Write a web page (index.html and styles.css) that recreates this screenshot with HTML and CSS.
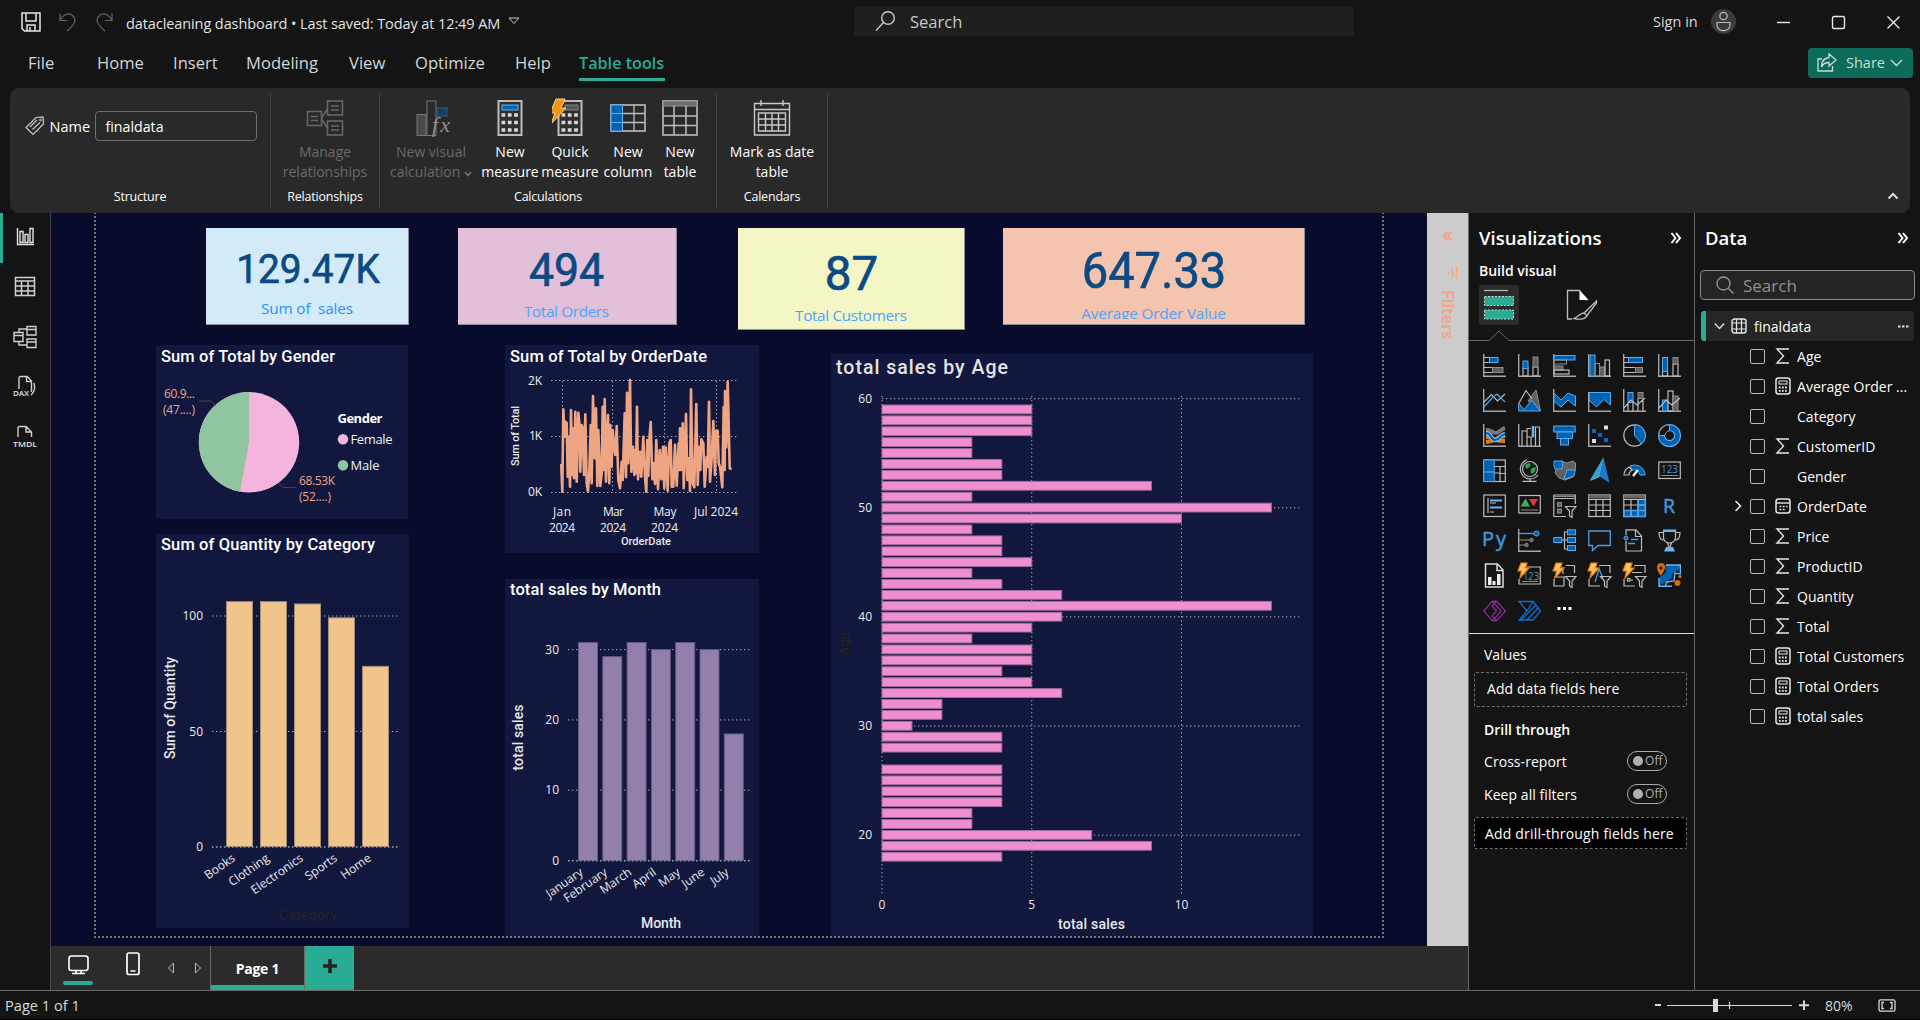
FILE: index.html
```html
<!DOCTYPE html>
<html lang="en">
<head>
<meta charset="utf-8">
<title>datacleaning dashboard</title>
<link rel="stylesheet" href="styles.css">
</head>
<body>
<header class="titlebar">
  <div class="quick">
    <svg width="20" height="20" viewBox="0 0 20 20" class="ln"><path stroke="#e6e6e6" stroke-width="1.5" d="M1 1H19V19H3.5L1 16.5ZM5 1V9H15V1M6 19V13H14V19M9 19V15"/></svg>
    <svg width="18" height="20" viewBox="0 0 18 20" class="ln"><path stroke="#666" stroke-width="1.2" d="M1 1.500V8.500H8M1 8C4 3 9 0 13 3C19 8 15 13 8 19"/></svg>
    <svg width="18" height="20" viewBox="0 0 18 20" class="ln"><path stroke="#666" stroke-width="1.2" d="M17 1.500V8.500H10M17 8C14 3 9 0 5 3C-1 8 3 13 10 19"/></svg>
  </div>
  <span class="doc">datacleaning dashboard • Last saved: Today at 12:49 AM</span>
  <svg class="ln doc-arrow" width="12" height="8" viewBox="0 0 12 8"><path stroke="#ccc" d="M1 1H11L6 6.500Z"/></svg>
  <div class="search-top">
    <svg width="22" height="22" viewBox="0 0 22 22" class="ln"><circle cx="13" cy="8" r="6.300" stroke="#c8c8c8" stroke-width="1.400"/><path stroke="#c8c8c8" stroke-width="1.400" d="M8.500 12.500L1 20.500"/></svg>
    <span>Search</span>
  </div>
  <div class="account"><span>Sign in</span>
    <svg width="25" height="25" viewBox="0 0 25 25" class="ln"><circle cx="12.500" cy="12.500" r="12.500" fill="#3b3b3b"/><circle cx="12.500" cy="7" r="3.700" stroke="#bbb" stroke-width="1.200"/><path stroke="#bbb" stroke-width="1.200" d="M6 13.500H19V16C19 23.500 6 23.500 6 16Z"/></svg>
  </div>
  <div class="winbtns">
    <svg width="15" height="15" viewBox="0 0 15 15" class="ln"><path stroke="#e6e6e6" stroke-width="1.400" d="M1 7.500H14"/></svg>
    <svg width="15" height="15" viewBox="0 0 15 15" class="ln"><rect x="1.500" y="1.500" width="12" height="12" rx="1.500" stroke="#e6e6e6" stroke-width="1.400"/></svg>
    <svg width="15" height="15" viewBox="0 0 15 15" class="ln"><path stroke="#e6e6e6" stroke-width="1.400" d="M1.500 1.500L13.500 13.500M13.500 1.500L1.500 13.500"/></svg>
  </div>
</header>
<nav class="menubar">
  <span class="m-file">File</span><span class="m-home">Home</span><span class="m-insert">Insert</span><span class="m-model">Modeling</span><span class="m-view">View</span><span class="m-opt">Optimize</span><span class="m-help">Help</span><span class="m-tools active">Table tools</span>
  <button class="share"><svg width="20" height="20" viewBox="0 0 20 20" class="ln"><path stroke="#c6ded8" stroke-width="1.300" d="M5 6H1V18H15.500V13M12 1L19 7L12 13V9.500C8 9.500 6 11 4.500 14C4.500 8 8 5 12 4.500Z"/></svg><span>Share</span><svg width="13" height="8" viewBox="0 0 13 8" class="ln"><path stroke="#c6ded8" stroke-width="1.400" d="M1 1L6.500 6.500L12 1"/></svg></button>
</nav>

<section class="ribbon">
  <div class="group g-structure">
    <div class="name-row">
      <svg width="20" height="20" viewBox="0 0 20 20" class="ln"><path stroke="#c8c8c8" stroke-width="1.200" d="M11 1.500L18 1L18.500 8L8 18.500L1 11.500ZM5 11L12 4M7.500 13.500L15 6.500"/><circle cx="15.500" cy="4" r="1" stroke="#c8c8c8"/></svg>
      <label>Name</label><div class="name-input">finaldata</div>
    </div>
    <div class="glabel">Structure</div>
  </div>
  <div class="group g-rel">
    <div class="btns"><div class="rbtn dim">
      <svg width="38" height="40" viewBox="0 0 38 40" class="ln"><g stroke="#666" stroke-width="1.600"><rect x="1.500" y="13.500" width="14" height="14"/><rect x="21.500" y="3" width="15" height="14"/><rect x="21.500" y="23" width="15" height="14"/><path d="M4.500 18.500H12M4.500 22.500H12M25 8H33M25 12H33M25 28H33M25 32H33M15.500 20L21.500 11M15.500 21L21.500 30"/></g></svg>
      <span>Manage<br>relationships</span></div></div>
    <div class="glabel">Relationships</div>
  </div>
  <div class="group g-calc">
    <div class="btns">
      <div class="rbtn dim w96">
        <svg width="38" height="40" viewBox="-3 0 38 40" class="ln"><rect x="2" y="16.500" width="9" height="21" fill="#4a4a4a" stroke="#777"/><rect x="12" y="3" width="9" height="34.500" stroke="#777"/><rect x="22" y="10" width="10" height="8" fill="#173f60" stroke="#2c5c82"/><text x="17" y="34" class="fx" textLength="18">fx</text></svg>
        <span>New visual<br>calculation <svg width="8" height="6" viewBox="0 0 8 6" class="ln"><path stroke="#777" stroke-width="1.500" d="M1 1L4 4.500L7 1"/></svg></span></div>
      <div class="rbtn w62">
        <svg width="26" height="40" viewBox="0 0 26 40" class="ln"><rect x="1.500" y="3" width="23" height="34" fill="#2f2f2f" stroke="#bdbdbd" stroke-width="2"/><rect x="5" y="7" width="16" height="5" fill="#0064b5" stroke="#69afe9"/><path stroke="#d6d6d6" stroke-width="3.600" stroke-dasharray="3.800 2.500" d="M4.500 17H21.500M4.500 24.500H21.500M4.500 32H21.500"/></svg>
        <span>New<br>measure</span></div>
      <div class="rbtn w58">
        <svg width="36" height="40" viewBox="4 0 36 40" class="ln quick-ico"><rect x="10.500" y="3" width="23" height="34" fill="#2f2f2f" stroke="#bdbdbd" stroke-width="2"/><rect x="17" y="7" width="13" height="5" fill="#555" stroke="#888"/><path stroke="#d6d6d6" stroke-width="3.600" stroke-dasharray="3.800 2.500" d="M13.500 17H30.500M13.500 24.500H30.500M13.500 32H30.500"/><path fill="#ef9518" stroke="#ffd48a" d="M8 1H17L13 10H18L3 26L7 15H2Z"/></svg>
        <span>Quick<br>measure</span></div>
      <div class="rbtn w58">
        <svg width="38" height="40" viewBox="0 0 38 40" class="ln"><rect x="2" y="7" width="34" height="26" stroke="#bdbdbd" stroke-width="1.600"/><rect x="2" y="7" width="11.500" height="26" fill="#0064b5" stroke="#69afe9"/><path stroke="#bdbdbd" stroke-width="1.300" d="M25 7V33M13.500 15.500H36M13.500 24.500H36"/><path stroke="#69afe9" d="M2 15.500H13.500M2 24.500H13.500"/></svg>
        <span>New<br>column</span></div>
      <div class="rbtn w46">
        <svg width="38" height="40" viewBox="0 0 38 40" class="ln"><rect x="2" y="3" width="34" height="34" stroke="#bdbdbd" stroke-width="1.600"/><rect x="2" y="3" width="34" height="5" fill="#6a6a6a" stroke="#999"/><path stroke="#bdbdbd" stroke-width="1.500" d="M13 8V37M25 8V37M2 18H36M2 27.500H36"/></svg>
        <span>New<br>table</span></div>
    </div>
    <div class="glabel">Calculations</div>
  </div>
  <div class="group g-cal">
    <div class="btns"><div class="rbtn">
      <svg width="38" height="40" viewBox="0 0 38 40" class="ln"><path stroke="#c9c9c9" stroke-width="1.400" d="M1.500 5.500H36.500V37H1.500ZM1.500 11.500H36.500M8 2V8M30 2V8M5.500 15H32.500V33H5.500ZM12.500 15V33M19 15V33M25.500 15V33M5.500 21H32.500M5.500 27H32.500"/></svg>
      <span>Mark as date<br>table</span></div></div>
    <div class="glabel">Calendars</div>
  </div>
  <div class="collapse"><svg width="12" height="8" viewBox="0 0 12 8" class="ln"><path stroke="#ddd" stroke-width="2" d="M1.500 6.500L6 2L10.500 6.500"/></svg></div>
</section>

<main class="work">
  <aside class="rail">
    <div class="rail-item on"><svg width="19" height="19" viewBox="0 0 19 19" class="ln"><path stroke="#e2e2e2" stroke-width="1.400" d="M1.500 1V17.500H18M4 15.500V4.500H7V15.500ZM9 15.500V7.500H12V15.500ZM14 15.500V1.500H17V15.500Z"/></svg></div>
    <div class="rail-item"><svg width="22" height="21" viewBox="0 0 22 21" class="ln"><path stroke="#cfcfcf" stroke-width="1.500" d="M1.500 1.500H20.500V19.500H1.500ZM1.500 5H20.500M1.500 10H20.500M1.500 15H20.500M7.500 5V19.500M14 5V19.500"/></svg></div>
    <div class="rail-item"><svg width="24" height="24" viewBox="0 0 24 24" class="ln"><path stroke="#cfcfcf" stroke-width="1.400" d="M14 1.500H23V10H14ZM14 4.500H23M14 14H23V22.500H14ZM14 17H23M1 7.500H10V16.500H1ZM1 10.500H10M6 7.500V4H14M6 16.500V20H14"/></svg></div>
    <div class="rail-item"><svg width="24" height="23" viewBox="0 0 24 23" class="ln"><path stroke="#cfcfcf" stroke-width="1.400" d="M6 14V3C6 2 7 1.500 8 1.500H14L18.500 6V17M13.500 1.500V6.500H18.500M21 8C22 12 22 17 18 20"/><text x="0" y="21" class="tiny" textLength="16" lengthAdjust="spacingAndGlyphs">DAX</text></svg></div>
    <div class="rail-item"><svg width="24" height="23" viewBox="0 0 24 23" class="ln"><path stroke="#cfcfcf" stroke-width="1.400" d="M5 12V3C5 2 6 1.500 7 1.500H13L18.500 7V12M13 1.500V7H18.500"/><text x="0" y="21.500" class="tiny" textLength="24" lengthAdjust="spacingAndGlyphs">TMDL</text></svg></div>
  </aside>

  <div class="center">
    <div class="stage">
      <div class="canvas">
        <div class="page-edge"></div>
        <section class="visual card v-sales"><svg viewBox="206 228 203 97"><text class="big" x="236" y="284" font-size="41" textLength="145" lengthAdjust="spacingAndGlyphs">129.47K</text><text class="cap c1" x="261" y="314.500" textLength="93" xml:space="preserve">Sum of  sales</text></svg></section>
        <section class="visual card v-orders"><svg viewBox="458 228 219 97"><text class="big" x="529" y="287" font-size="46" textLength="76" lengthAdjust="spacingAndGlyphs">494</text><text class="cap" x="524" y="317.500" textLength="86">Total Orders</text></svg></section>
        <section class="visual card v-cust"><svg viewBox="738 228 227 102"><text class="big" x="825" y="291" font-size="48" textLength="54" lengthAdjust="spacingAndGlyphs">87</text><text class="cap" x="795" y="321.500" textLength="113">Total Customers</text></svg></section>
        <section class="visual card v-avg"><svg viewBox="1003 228 302 97"><clipPath id="avgClip"><rect x="1003" y="228" width="302" height="92"/></clipPath><text class="big" x="1081.500" y="289" font-size="50" textLength="146" lengthAdjust="spacingAndGlyphs">647.33</text><text class="cap" x="1081" y="319.500" textLength="146" clip-path="url(#avgClip)">Average Order Value</text></svg></section>

        <section class="visual panel v-gender"><svg viewBox="156 345 252 174">
          <text class="vtitle" x="161" y="362" textLength="174">Sum of Total by Gender</text>
          <circle cx="249" cy="442.300" r="50.200" fill="#f5b4dd"/>
          <path fill="#8fc5a0" d="M249 442.300L249 392.100A50.200 50.200 0 0 0 240 491.700Z"/>
          <path fill="none" stroke="#434653" d="M199 401H211L215.500 405.500M279 483L283 487.500H295.500"/>
          <g class="lab peach"><text x="164" y="398" textLength="31">60.9...</text><text x="163" y="414" textLength="32">(47....)</text><text x="299" y="485" textLength="36">68.53K</text><text x="299" y="501" textLength="32">(52....)</text></g>
          <text class="lab strong" x="337.500" y="423" textLength="45">Gender</text>
          <circle cx="343" cy="439.300" r="5.200" fill="#f5b4dd"/><text class="lab lg" x="350.500" y="444" textLength="42">Female</text>
          <circle cx="343" cy="465.200" r="5.200" fill="#8fc5a0"/><text class="lab lg" x="350.500" y="470" textLength="29">Male</text>
        </svg></section>

        <section class="visual panel v-date"><svg viewBox="505 345 254 208">
          <text class="vtitle" x="510" y="362" textLength="197">Sum of Total by OrderDate</text>
          <path class="grid" d="M551 380.500H739M551 436.500H739M551 492.500H739M562.500 381V492M612.500 381V492M664.500 381V492M716.500 381V492"/>
          <polyline id="dateLine" class="dline"/>
          <g class="lab"><text x="528" y="385" textLength="14">2K</text><text x="529" y="440" textLength="13">1K</text><text x="528" y="496" textLength="14">0K</text>
          <text x="553" y="516" textLength="18">Jan</text><text x="549" y="532" textLength="26">2024</text><text x="603" y="516" textLength="21">Mar</text><text x="600" y="532" textLength="26">2024</text><text x="653.500" y="516" textLength="23">May</text><text x="651" y="532" textLength="27">2024</text><text x="694" y="516" textLength="44">Jul 2024</text></g>
          <text class="axis sm" x="621" y="545" textLength="50">OrderDate</text>
          <text class="axis sm" transform="translate(519 466) rotate(-90)" textLength="60">Sum of Total</text>
        </svg></section>

        <section class="visual panel v-cat"><svg id="catChart" viewBox="156 534 253 394">
          <text class="vtitle" x="161" y="550" textLength="214">Sum of Quantity by Category</text>
          <text class="axis md" transform="translate(174.500 759) rotate(-90)" textLength="102">Sum of Quantity</text>
          <text class="ghost" x="279" y="920" textLength="58">Category</text>
        </svg></section>

        <section class="visual panel v-month"><svg id="monthChart" viewBox="505 579 254 358">
          <text class="vtitle" x="510" y="595" textLength="151">total sales by Month</text>
          <text class="axis md" transform="translate(523 770.500) rotate(-90)" textLength="66">total sales</text>
          <text class="axis" x="641" y="928" textLength="40">Month</text>
        </svg></section>

        <section class="visual panel v-age"><svg id="ageChart" viewBox="831 354 482 583">
          <text class="vtitle xl" x="836" y="373.500" textLength="172">total sales by Age</text>
          <text class="ghost" transform="translate(849 656) rotate(-90)" textLength="24">Age</text>
          <text class="axis" x="1058" y="929" textLength="67">total sales</text>
        </svg></section>
      </div>
      <aside class="filters">
        <svg width="11" height="12" viewBox="0 0 11 12" class="ln"><path stroke="#f4a58a" stroke-width="2" d="M5.500 1.500L1.500 6L5.500 10.500M9.500 1.500L5.500 6L9.500 10.500"/></svg>
        <svg width="12" height="13" viewBox="0 0 12 13" class="ln f-ico"><path stroke="#f4a58a" stroke-width="1.600" d="M10.500 0V13M6.500 2.500V10.500M2.500 5V8"/></svg>
        <span>Filters</span>
      </aside>
    </div>
    <footer class="pages">
      <div class="dev desk"><svg width="21" height="20" viewBox="0 0 21 20" class="ln"><rect x="1" y="1" width="19" height="14.500" rx="2.500" stroke="#fff" stroke-width="1.600"/><path stroke="#fff" stroke-width="1.600" d="M4 18.500H17M8 16V18M13 16V18"/></svg><i></i></div>
      <div class="dev phone"><svg width="14" height="24" viewBox="0 0 14 24" class="ln"><rect x="1" y="1" width="12" height="21.500" rx="2" stroke="#fff" stroke-width="1.700"/><path stroke="#fff" stroke-width="1.500" d="M4.500 19H9.500"/></svg></div>
      <svg class="ln arr a1" width="8" height="12" viewBox="0 0 8 12"><path stroke="#bbb" d="M6.500 1L1.500 6L6.500 11Z"/></svg>
      <svg class="ln arr a2" width="8" height="12" viewBox="0 0 8 12"><path stroke="#bbb" d="M1.500 1L6.500 6L1.500 11Z"/></svg>
      <div class="ptab">Page 1</div>
      <div class="padd"><svg width="14" height="14" viewBox="0 0 14 14"><path stroke="#252423" stroke-width="3.600" d="M7 0V14M0 7H14"/></svg></div>
    </footer>
  </div>

  <aside class="viz">
    <div class="phead"><h2>Visualizations</h2><svg width="12" height="12" viewBox="0 0 12 12" class="ln"><path stroke="#fff" stroke-width="2" d="M1.500 1L5.500 6L1.500 11M6 1L10 6L6 11"/></svg></div>
    <h3>Build visual</h3>
    <div class="modes">
      <div class="mode on"><svg width="40" height="40" viewBox="0 0 40 40" class="ln"><path stroke="#b5b5b5" stroke-width="1.300" d="M5 5.500H29"/><rect x="5.500" y="11.500" width="29" height="9" fill="#2aab94" stroke="#d5d5d5" stroke-dasharray="2 1.500"/><rect x="5.500" y="25" width="29" height="9" fill="#2aab94" stroke="#d5d5d5" stroke-dasharray="2 1.500"/></svg></div>
      <div class="mode"><svg width="40" height="40" viewBox="0 0 40 40" class="ln"><path stroke="#bdbdbd" stroke-width="1.300" d="M10 34H5.500V5.500H18M24 14V15.500"/><path fill="#fff" d="M17.500 5V15H26.500Z"/><path stroke="#bdbdbd" stroke-width="1.300" d="M34.500 16L22 28L25 30.500L34.500 18ZM22 28C18 28 17 31 12 33.500C18 35 24 34 25 30.500"/></svg></div>
    </div>
    <svg class="notch ln" width="225" height="11" viewBox="0 0 225 11"><path stroke="#6a6a6a" d="M0 10.500H20L30 1L40 10.500H225"/></svg>
    <div class="vgrid">
      <svg viewBox="0 0 23 23"><path class="ax" d="M.7 0V22.300H23"/><path class="w" d="M1 3.500H7M1 8.500H7M1 13.500H10M1 18.500H10"/><rect class="b" x="6.500" y="3.500" width="8.500" height="5"/><rect class="g" x="9.500" y="13.500" width="10.500" height="5"/></svg>
      <svg viewBox="0 0 23 23"><path class="ax" d="M.7 0V22.300H23"/><rect class="w" x="5" y="14" width="5" height="8"/><rect class="w" x="15" y="13" width="5" height="9"/><rect class="b" x="5" y="7" width="5" height="7.500"/><rect class="g" x="15" y="3" width="5" height="10"/></svg>
      <svg viewBox="0 0 23 23"><path class="ax" d="M.7 0V22.300H23"/><rect class="b" x="1" y="1.500" width="21" height="4.500"/><rect class="d" x="1" y="6" width="12.500" height="4"/><rect class="g" x="1" y="12" width="9" height="4"/><rect class="w" x="1" y="16" width="15" height="4"/></svg>
      <svg viewBox="0 0 23 23"><path class="ax" d="M.7 0V22.300H23"/><rect class="b" x="2" y="1" width="5" height="21"/><rect class="d" x="7" y="9.500" width="4.500" height="12.500"/><rect class="g" x="11.500" y="13" width="5" height="9"/><rect class="w" x="17" y="6" width="4.500" height="16"/></svg>
      <svg viewBox="0 0 23 23"><path class="ax" d="M.7 0V22.300H23"/><path class="w" d="M1 3.500H6M1 8.500H6M1 13.500H13M1 18.500H13"/><rect class="b" x="5.500" y="3.500" width="14" height="5"/><rect class="g" x="12.500" y="13.500" width="7" height="5"/></svg>
      <svg viewBox="0 0 23 23"><path class="ax" d="M.7 0V22.300H23"/><rect class="w" x="4.500" y="17" width="5" height="5"/><rect class="w" x="15" y="10" width="5" height="12"/><rect class="b" x="4.500" y="3.500" width="5" height="14"/><rect class="g" x="15" y="3.500" width="5" height="6.500"/></svg>

      <svg viewBox="0 0 23 23"><path class="ax" d="M.7 0V22.300H23"/><path class="w" d="M1 13L8.500 5.500L14.500 12L22 5"/><path class="bl" d="M1 18L10 8L14 5L22 13"/></svg>
      <svg viewBox="0 0 23 23"><path class="g" d="M10 12L18 1L22.500 22Z"/><path class="w" d="M1 14L8 1.500L14 10"/><path class="b" d="M.7 14L6 21L13.500 11L22.300 22H.7Z"/></svg>
      <svg viewBox="0 0 23 23"><path class="ax" d="M.7 0V22.300H23"/><path class="b" d="M1 4L8 11L15 4L22.500 7V17L15 11L8 18L1 12Z"/></svg>
      <svg viewBox="0 0 23 23"><path class="b" d="M1 3.500H22.500V16L16 10.500L8.500 18L1 11Z"/><path class="ax" d="M.7 3V22.300H23"/></svg>
      <svg viewBox="0 0 23 23"><path class="ax" d="M.7 0V22.300H23"/><rect class="b" x="5" y="3.500" width="5" height="10"/><rect class="g" x="15" y="3.500" width="5" height="6"/><path class="w" d="M5 14V22M10 14V22M15 10V22M20 10V22M1 19L8 11L14 16L22 9"/></svg>
      <svg viewBox="0 0 23 23"><path class="ax" d="M.7 0V22.300H23"/><rect class="w" x="10" y="2" width="5" height="20"/><rect class="b" x="4.500" y="11" width="5" height="11"/><rect class="g" x="15" y="7" width="5" height="15"/><path class="w" d="M1 19L8 11L14 16L22 9"/></svg>

      <svg viewBox="0 0 23 23"><path class="ax" d="M.7 0V22.300H23"/><path fill="none" stroke="#e07a10" stroke-width="4" d="M3 13C9 13 8 15 12 16C17 17 18 17 22 17M3 18C8 18 12 16 16 13L22 12"/><path fill="none" stroke="#777" stroke-width="4" d="M3 6C8 5 9 9 13 9C16 9 18 5 22 4"/><path fill="none" stroke="#7dbdf5" stroke-width="4.500" d="M3 9C8 9 8 16 12 16C17 16 17 11 22 10"/><path fill="none" stroke="#0063b1" stroke-width="2.200" d="M3 9C8 9 8 16 12 16C17 16 17 11 22 10"/></svg>
      <svg viewBox="0 0 23 23"><path class="ax" d="M.7 0V22.300H23"/><path class="w" d="M4 22V7H9V22M9 4.500H13M9 4.500V13H13V22M17.500 22V3H21.500V22"/><path fill="#0063b1" stroke="#6cb2ee" stroke-width="2.600" d="M15 2V13.500"/></svg>
      <svg viewBox="0 0 23 23"><rect class="b" x=".7" y="2" width="21.500" height="6"/><rect class="b" x="4" y="8" width="15.500" height="6.500"/><rect class="b" x="7.500" y="14.500" width="8" height="6.500"/></svg>
      <svg viewBox="0 0 23 23"><path class="ax" d="M.7 0V22.300H23"/><path fill="#0a66c2" d="M4 5H8V9H4ZM10 9H14V13H10ZM16 14H20V18H16Z"/><path fill="#ddd" d="M16 1.500H20V5.500H16ZM4 15H8V19H4Z"/></svg>
      <svg viewBox="0 0 23 23"><circle class="w" cx="11.500" cy="11.500" r="10.700"/><path class="b" d="M11.500 .8A10.700 10.700 0 0 1 18.500 19.600L11.500 11.500Z"/></svg>
      <svg viewBox="0 0 23 23"><circle fill="none" stroke="#6cb2ee" stroke-width="7" cx="11.500" cy="11.500" r="8"/><circle fill="none" stroke="#0063b1" stroke-width="5" cx="11.500" cy="11.500" r="8"/><path fill="#141414" stroke="#999" d="M.8 11.500A10.700 10.700 0 0 1 11.500 .8V7A4.500 4.500 0 0 0 7 11.500Z"/></svg>

      <svg viewBox="0 0 23 23"><rect class="w" x=".7" y="1" width="21.600" height="21.500"/><rect class="b" x=".7" y="1" width="10.500" height="21.500"/><path class="bl" d="M1 13H11"/><path class="w" d="M11.500 7.500H22M17 7.500V22M11.500 14H17M17 14.500H22"/></svg>
      <svg viewBox="0 0 23 23"><circle class="w" cx="12" cy="10" r="7.500"/><path class="w" d="M9 .8A9.800 9.800 0 1 0 20 16M12 19.500V22M4.500 22.300H18.500"/><path fill="#2f9e44" d="M8 5L12 4L12.500 7L9 10L7 8ZM14 9L18 8L17 13L13 15L12.500 11ZM14 4L17 5L16 6Z"/></svg>
      <svg viewBox="0 0 23 23"><path class="g" d="M10 3L14 4L20 2L22.500 4V10L20 18L12 21L6 19L2 14L3 10Z"/><path class="b" d="M1 2H10L9 10H2L1 7ZM14 11H22L21 17L15 19L11 20Z"/></svg>
      <svg viewBox="0 0 23 23"><path fill="#4fc3e8" d="M15.500 -1.500L16 16L2 22Z"/><path fill="#1f78c8" d="M15.500 -1.500L21.500 24L11 17Z"/><path fill="#3f9fd0" d="M15.500 -1.500L11 17L2 21Z"/></svg>
      <svg viewBox="0 0 23 23"><path class="w" d="M1 16A10.500 9.500 0 0 1 6 8L9 11A6 6 0 0 0 6 16Z"/><path class="b" d="M7 7A10.500 9.500 0 0 1 22 16H17A6 6 0 0 0 9.500 11Z"/><path stroke="#fff" stroke-width="2.200" d="M10 17L15 11"/></svg>
      <svg viewBox="0 0 23 23"><rect class="w" x=".8" y="3" width="21.500" height="16.500"/><text class="n123" x="3" y="13.500" textLength="17" lengthAdjust="spacingAndGlyphs">123</text><path class="d" d="M3 16.500H20"/></svg>

      <svg viewBox="0 0 23 23"><rect class="w" x=".8" y="1" width="21.500" height="21.500"/><path class="w" d="M5 4V19M7 9H13M7 18H11"/><path stroke="#6cb2ee" stroke-width="2" d="M7 6.500H19M7 13.500H19"/></svg>
      <svg viewBox="0 0 23 23"><rect class="w" x=".8" y="1.500" width="21.500" height="17.500"/><path fill="#3fae55" d="M2.500 12.500L7.500 4.500L12 12.500Z"/><path fill="#e33" d="M11 5H20L15.500 12.500Z"/><path class="d" d="M3 16H20"/></svg>
      <svg viewBox="0 0 23 23"><path class="w" d="M13 22.500H.8V1H22.300V10M.8 4.500H22.300"/><path class="d" d="M1 2.500H22"/><rect class="g" x="4.500" y="8.500" width="4" height="4"/><rect class="g" x="4.500" y="15" width="4" height="4"/><path class="w" d="M12.500 12.500H23L19 17V23.500L16.500 22V17Z"/></svg>
      <svg viewBox="0 0 23 23"><rect class="w" x=".8" y="1" width="21.500" height="21.500"/><path stroke="#666" stroke-width="3" d="M1.500 3H22"/><path class="w" d="M1 5.500H22M8 5.500V22M15 5.500V22M1 11H22M1 16.500H22"/></svg>
      <svg viewBox="0 0 23 23"><path fill="#0063b1" d="M15 5H22.500V22.500H1V16.500H15Z"/><rect class="w" x=".8" y="1" width="21.500" height="21.500"/><path stroke="#666" stroke-width="3" d="M1.500 3H22"/><path class="w" d="M1 5.500H22M8 5.500V22M15 5.500V22M1 11H22M1 16.500H22"/><path class="bl" d="M15 11H22M8 17V22M15 5.500V22M15 16.500H22.500V22.500H1V16.500H15M22.500 6V22"/></svg>
      <svg viewBox="0 0 23 23"><text class="rpy" x="5" y="18.500" font-size="20" textLength="12" lengthAdjust="spacingAndGlyphs">R</text></svg>

      <svg viewBox="0 0 23 23"><text class="rpy" x="-1" y="17" font-size="20" textLength="24">Py</text></svg>
      <svg viewBox="0 0 23 23"><path class="ax" d="M.7 0V22.300H23"/><path class="bl" d="M1 4.500H16"/><circle class="b" cx="18.500" cy="4.500" r="2.500"/><path class="d" d="M1 11H12M1 16H7"/><circle class="g" cx="13.500" cy="11" r="1.700"/><circle class="g" cx="8.500" cy="16" r="1.700"/></svg>
      <svg viewBox="0 0 23 23"><path class="w" d="M8 11H11.500M14.500 3H11.500V20H14.500M11.500 11H14.500"/><rect class="b" x=".8" y="8.500" width="8" height="5"/><rect class="b" x="14.500" y=".8" width="8" height="5"/><rect class="b" x="14.500" y="8.500" width="8" height="5"/><rect class="b" x="14.500" y="16.500" width="8" height="5"/></svg>
      <svg viewBox="0 0 23 23"><path class="bl" d="M.8 2H22.300V16.500H10L4.500 21.500V16.500H.8Z"/></svg>
      <svg viewBox="0 0 23 23"><path class="w" d="M3 6V.8H13L18.500 7V22H3V12M12.500 1V7.500H18"/><circle class="b" cx="3" cy="9" r="2"/><path class="bl" d="M8 10.500H15M5 14.500H12"/></svg>
      <svg viewBox="0 0 23 23"><path class="w" d="M5.500 2H17.500V8C17.500 16 5.500 16 5.500 8ZM5.500 3.500H1C1 9 3 11 6 11M17.500 3.500H22C22 9 20 11 17 11M9.500 14L11 18M13.500 14L12 18"/><path fill="#6cb2ee" d="M5 .5H18V3H5ZM8 18H15L17 22.500H6Z"/></svg>

      <svg viewBox="0 0 23 23"><path fill="none" stroke="#ddd" stroke-width="1.500" d="M2.500 0H14.500L20 6V23H2.500ZM14 0V6.500H20"/><path fill="#eee" d="M5 13H8.500V21H5ZM9.500 17H12.500V21H9.500ZM14 10H17.500V21H14Z"/></svg>
      <svg viewBox="0 0 23 23"><path class="w" d="M9 3H22.300V20H1V15"/><text class="n123" x="5" y="15.500" textLength="16" lengthAdjust="spacingAndGlyphs">123</text><path class="d" d="M4 17.500H20"/><path class="bolt" d="M3 -1H9L7.500 4H11L2 14L3.500 7H0Z"/></svg>
      <svg viewBox="0 0 23 23"><path class="w" d="M13 1.500H21.500V9M1 15V22H11M1 13H11V22M10 3V10"/><path class="w" d="M12.500 12.500H23L19 17V23.500L16.500 22V17Z"/><path class="bolt" d="M3 -1H9L7.500 4H11L2 14L3.500 7H0Z"/></svg>
      <svg viewBox="0 0 23 23"><path class="w" d="M11 1.500H22V9M1 15V22H12"/><path class="bl" d="M7 18L11 5L15 14"/><path class="w" d="M12.500 12.500H23L19 17V23.500L16.500 22V17Z"/><path class="bolt" d="M3 -1H9L7.500 4H11L2 14L3.500 7H0Z"/></svg>
      <svg viewBox="0 0 23 23"><path class="w" d="M11 1.500H22V9M1 15V22H12M9 8.500H19M8 16H10"/><rect class="w" x="4.500" y="14.500" width="2.500" height="2.500"/><path class="w" d="M12.500 12.500H23L19 17V23.500L16.500 22V17Z"/><path class="bolt" d="M3 -1H9L7.500 4H11L2 14L3.500 7H0Z"/></svg>
      <svg viewBox="0 0 23 23"><path fill="#0063b1" d="M7 1H22L21 6L15 9L14 14L8 18L1 22V14L8 8Z"/><path fill="none" stroke="#6cb2ee" stroke-width="1.400" d="M8 1H22.300V10L17 9L16 17L9 18L7 22M1 14V22.300H14"/><path fill="#d96a0a" d="M3 -1A4 4 0 0 1 7 3C7 7 4 9 3 12C1 9 -1 7 -1 3A4 4 0 0 1 3 -1Z"/><circle cx="3" cy="4" r="1.500" fill="#141414"/><circle cx="19.500" cy="19" r="3" fill="#d96a0a"/><circle cx="22" cy="12.500" r="1.600" fill="#d96a0a"/></svg>

      <svg viewBox="0 -1 23 23"><path fill="none" stroke="#8b2f9b" stroke-width="1.200" d="M9.500 1H13.500L22.500 11L13.500 21H9.500L.8 11ZM9.500 1L18 11L9.500 21M13.500 1L9 6L13.500 11L9 16L13.500 21"/></svg>
      <svg viewBox="0 -1 23 23"><path fill="none" stroke="#0f6fd1" stroke-width="1.300" d="M1 1.500H15L22.500 11L15 20H1L9 11ZM9 11L15 1.500M3 20L18 5M9 20L20 8"/></svg>
      <svg viewBox="0 0 23 23"><path fill="#fff" d="M4.500 8H7.500V11H4.500ZM10 8H13V11H10ZM15.500 8H18.500V11H15.500Z"/></svg>
    </div>
    <div class="wells">
      <div class="wl">Values</div>
      <div class="drop d1">Add data fields here</div>
      <h4>Drill through</h4>
      <div class="tg"><span>Cross-report</span><b class="off"><i></i>Off</b></div>
      <div class="tg t2"><span>Keep all filters</span><b class="off"><i></i>Off</b></div>
      <div class="drop d2">Add drill-through fields here</div>
    </div>
  </aside>

  <aside class="data">
    <div class="phead"><h2>Data</h2><svg width="12" height="12" viewBox="0 0 12 12" class="ln"><path stroke="#fff" stroke-width="2" d="M1.500 1L5.500 6L1.500 11M6 1L10 6L6 11"/></svg></div>
    <div class="dsearch"><svg width="18" height="18" viewBox="0 0 18 18" class="ln"><circle cx="7.500" cy="7.500" r="6.500" stroke="#999" stroke-width="1.300"/><path stroke="#999" stroke-width="1.300" d="M12.500 12.500L17.500 17.500"/></svg><span>Search</span></div>
    <div class="trow"><svg width="11" height="8" viewBox="0 0 11 8" class="ln"><path stroke="#ddd" stroke-width="1.400" d="M.8 1.500L5.500 6.500L10.200 1.500"/></svg><svg class="ln ti" width="16" height="16" viewBox="0 0 16 16"><rect x="1" y="1" width="14" height="14" rx="2.500" stroke="#e6e6e6" stroke-width="1.400"/><path stroke="#e6e6e6" stroke-width="1.200" d="M1 5H15M1 11H15M5.500 1V15M10.500 1V15"/></svg><span>finaldata</span><svg class="dots" width="11" height="3" viewBox="0 0 11 3"><path fill="#ddd" d="M0 .5H2.500V2.500H0ZM4 .5H6.500V2.500H4ZM8 .5H10.500V2.500H8Z"/></svg></div>
    <div id="fields" class="fields"></div>
  </aside>
</main>

<footer class="status">
  <span>Page 1 of 1</span>
  <svg class="zoomer" width="160" height="20" viewBox="0 0 160 20"><path stroke="#d8d8d8" stroke-width="1.200" d="M12 10.500H137M74.500 7V14"/><path fill="#d8d8d8" d="M58 4H63V17H58ZM0 9H6V11H0ZM144 9.200H154V11.200H144ZM148 5.500H150V15H148Z"/></svg>
  <span class="pct">80%</span>
  <svg class="ln" width="18" height="13" viewBox="0 0 18 13"><rect x="1" y=".8" width="16" height="11.400" rx="1.800" stroke="#d8d8d8" stroke-width="1.300"/><path stroke="#d8d8d8" stroke-width="1.300" d="M6 3.500H4V9.500H6M12 3.500H14V9.500H12"/></svg>
</footer>
<script src="script.js"></script>
</body>
</html>
```
FILE: styles.css
```css
* { box-sizing: border-box; }
body { margin: 0; width: 1920px; height: 1020px; overflow: hidden; background: #141414; color: #fff; font-family: "Open Sans", "Noto Sans", sans-serif; font-size: 14px; display: flex; flex-direction: column; }
h2, h3, h4 { margin: 0; font-weight: 600; }
svg { display: block; flex: none; }
.ln { fill: none; }
span { white-space: nowrap; }

.titlebar { height: 42px; flex: none; display: flex; align-items: flex-start; }
.quick { display: flex; gap: 18px; padding: 12px 0 0 21px; width: 126px; flex: none; }
.doc { font-size: 14.500px; line-height: 20px; margin-top: 14px; width: 374px; color: #e2e2e2; letter-spacing: -0.09px; flex: none; }
.doc-arrow { margin: 17px 0 0 8px; width: 12px; }
.search-top { margin: 6px 0 0 334px; width: 500px; height: 30px; background: #1f1f1f; border-radius: 3px; display: flex; align-items: center; padding-left: 21px; color: #c8c8c8; font-size: 16.500px; gap: 13px; }
.account { display: flex; margin: 9px 0 0 299px; color: #d8d8d8; width: 83px; justify-content: space-between; line-height: 25px; font-size: 14.500px; }
.winbtns { display: flex; gap: 40px; margin: 15px 0 0 40px; }

.menubar { height: 46px; flex: none; display: flex; align-items: flex-start; color: #d6d6d6; font-size: 16.600px; line-height: 24px; padding: 9px 7px 0 28px; }
.menubar > span { height: 30px; }
.m-file { width: 69px; } .m-home { width: 76px; } .m-insert { width: 73px; } .m-model { width: 103px; } .m-view { width: 66px; } .m-opt { width: 100px; } .m-help { width: 64px; }
.active { color: #2aab94; font-weight: 600; border-bottom: 3px solid #2aab94; width: 86px; font-size: 16.200px; }
.share { margin: -3px 0 0 auto; width: 105px; height: 30px; border: 0; border-radius: 4px; background: #0d6b59; color: #c6ded8; font: 14.500px "Open Sans", sans-serif; display: flex; align-items: center; padding: 0 0 1px 9px; gap: 9px; }
.share svg:last-child { margin-left: -4px; }

.ribbon { height: 125px; width: 1900px; margin-left: 10px; flex: none; background: #292929; border-radius: 9px; display: flex; padding: 5px 0; }
.group { border-right: 1px solid #414141; display: flex; flex-direction: column; justify-content: space-between; align-items: center; }
.g-structure { width: 261px; } .g-rel { width: 109px; } .g-calc { width: 337px; } .g-cal { width: 111px; }
.glabel { font-size: 12.500px; line-height: 18px; margin-bottom: 2px; letter-spacing: -0.2px; }
.name-row { display: flex; align-items: center; margin-top: 18px; width: 261px; padding-left: 15px; }
.name-row label { width: 46px; margin-left: 5px; font-size: 14.500px; }
.name-input { width: 162px; height: 30px; border: 1px solid #6f6f6f; border-radius: 4px; padding-left: 10px; line-height: 29px; margin-left: -1px; font-size: 14.200px; }
.btns { display: flex; padding-top: 5px; }
.g-calc .btns { width: 320px; margin-left: -10px; }
.rbtn { display: flex; flex-direction: column; align-items: center; text-align: center; line-height: 20px; font-size: 14px; gap: 4px; flex: none; }
.rbtn span svg { display: inline-block; }
.dim { color: #6a6a6a; }
.w96 { width: 96px; } .w62 { width: 62px; } .w58 { width: 58px; } .w46 { width: 46px; }
.fx { font: italic 22px "Liberation Serif", serif; fill: #909090; }
.collapse { margin: 99px 11px 0 auto; }

.work { flex: none; height: 778px; display: flex; border-bottom: 1px solid #6a6a6a; }
.rail { width: 51px; border-right: 1px solid #484848; flex: none; }
.rail-item { height: 50px; display: flex; align-items: center; justify-content: center; padding: 0 3px 3px 0; border-left: 3px solid transparent; }
.rail-item.on { border-color: #2aab94; }
.tiny { font: 600 7.500px "Open Sans", sans-serif; fill: #e0e0e0; }

.center { width: 1417px; flex: none; display: flex; flex-direction: column; }
.stage { height: 733px; display: flex; }
.canvas { width: 1376px; background: #080b2c; position: relative; flex: none; overflow: hidden; }
.page-edge { position: absolute; left: 43px; top: -10px; width: 1290px; height: 735px; border: 2px dotted #77746f; z-index: 2; }
.visual { position: absolute; }
.visual svg { width: 100%; height: 100%; }
.card { border: solid #8a8f9c; border-width: 0 1px 1px 0; }
.v-sales { left: 155px; top: 15px; width: 203px; height: 97px; background: #d3eaf8; }
.v-orders { left: 407px; top: 15px; width: 219px; height: 97px; background: #e3c0d9; }
.v-cust { left: 687px; top: 15px; width: 227px; height: 102px; background: #f4f6c6; }
.v-avg { left: 952px; top: 15px; width: 302px; height: 97px; background: #f4c4ae; }
.panel { background: #12173e; }
.v-gender { left: 105px; top: 132px; width: 252px; height: 174px; }
.v-date { left: 454px; top: 132px; width: 254px; height: 208px; }
.v-cat { left: 105px; top: 321px; width: 253px; height: 394px; }
.v-month { left: 454px; top: 366px; width: 254px; height: 358px; }
.v-age { left: 780px; top: 141px; width: 482px; height: 583px; }
.big { font-family: Roboto, sans-serif; fill: #0b4a82; stroke: #0b4a82; stroke-width: 0.7; }
.cap { font-size: 15.500px; fill: #4fa5f7; }
.c1 { fill: #2b92fc; }
.vtitle { font: 500 16.500px Roboto, sans-serif; fill: #fff; }
.vtitle.xl { font-size: 19.500px; fill: #e4e4e6; }
.lab { font-size: 12px; fill: #f0f0f0; }
.lg { font-size: 13px; }
.strong { font-weight: 700; font-size: 13px; fill: #fff; }
.peach { fill: #eba68a; }
.axis { font: 500 14px Roboto, sans-serif; fill: #e8e8e8; }
.axis.sm { font-size: 11px; }
.axis.md { font-size: 14px; }
.ghost { font: 14px Roboto, sans-serif; fill: #252423; }
.tick { font: 12px "Open Sans", sans-serif; fill: #ececec; }
.cats { font: 12px "Open Sans", sans-serif; fill: #ececec; }
.grid { stroke: #a6a8b4; stroke-dasharray: 1.400 2.600; fill: none; }
.dline { fill: none; stroke: #eea584; stroke-width: 2.600; stroke-linejoin: round; stroke-linecap: round; }
.bar-cat { fill: #efc58b; stroke: #a38a72; }
.bar-month { fill: #9280ab; stroke: #63588a; }
.bar-age { fill: #f08fce; stroke: #a06a9f; }

.filters { width: 41px; background: #ccc; flex: none; display: flex; flex-direction: column; align-items: center; padding-top: 17px; }
.f-ico { margin: 24px 0 0 9px; }
.filters span { writing-mode: vertical-rl; color: #f4a58a; font-size: 16.500px; font-weight: 600; line-height: 22px; margin-top: 11px; margin-left: 1px; height: 56px; -webkit-text-stroke: 0.3px #f4a58a; }

.pages { height: 44px; background: #2b2b2b; display: flex; }
.dev { display: flex; flex-direction: column; align-items: center; padding-top: 9px; }
.desk { width: 30px; margin-left: 12px; }
.desk i { width: 30px; height: 4px; border-radius: 2px; background: #2aab94; margin-top: 6px; }
.phone { width: 14px; margin-left: 33px; padding-top: 6px; }
.arr { margin-top: 16px; }
.a1 { margin-left: 27px; } .a2 { margin-left: 19px; }
.ptab { width: 95px; margin-left: 8px; border-left: 1px solid #6a6a6a; border-right: 1px solid #6a6a6a; box-shadow: inset 0 -5px #2aab94; font-weight: 700; font-size: 14px; text-align: center; line-height: 45px; letter-spacing: -0.3px; }
.padd { width: 49px; background: #2aab94; display: flex; align-items: center; justify-content: center; padding-bottom: 4px; }

.viz { width: 227px; border-left: 1px solid #6a6a6a; border-right: 1px solid #6a6a6a; flex: none; overflow: hidden; }
.phead { display: flex; justify-content: space-between; align-items: center; height: 28px; margin: 11px 12px 0 10px; }
h2 { font-size: 18.500px; line-height: 28px; }
h3 { font-size: 14px; line-height: 20px; margin: 9px 0 0 10px; }
.modes { display: flex; gap: 43px; padding: 4px 0 0 10px; }
.mode { width: 40px; height: 40px; border-radius: 3px; }
.mode.on { background: #2b2b2b; }
.notch { margin-top: 5px; }
.vgrid { display: grid; grid-template-columns: repeat(6, 23px); grid-auto-rows: 23px; column-gap: 12px; row-gap: 12px; padding: 13px 0 0 14px; height: 292px; }
.vgrid svg { width: 23px; height: 23px; overflow: visible; }
.ax { fill: none; stroke: #a6a6a6; stroke-width: 1.400; }
.w { fill: none; stroke: #bcbcbc; stroke-width: 1.200; }
.g { fill: #606060; stroke: #8c8c8c; }
.d { fill: none; stroke: #8c8c8c; }
.b { fill: #0063b1; stroke: #5ba8ea; }
.bl { fill: none; stroke: #4a9fe6; stroke-width: 1.300; }
.bolt { fill: #ffc266; stroke: #e87d0a; stroke-width: 1.200; }
.n123 { font: 11.500px "Open Sans", sans-serif; fill: #3f97dd; }
.rpy { font-family: "Open Sans", sans-serif; fill: #3f97dd; stroke: #3f97dd; stroke-width: 0.5; }
.wells { border-top: 1px solid #e0e0e0; padding: 0 6px 0 5px; }
.wl { padding: 11px 0 0 10px; line-height: 20px; }
.drop { border: 1px dashed #6f6f6f; border-radius: 2px; width: 213px; }
.d1 { height: 35px; margin-top: 7px; line-height: 31px; padding-left: 12px; letter-spacing: 0.08px; }
h4 { font-size: 14px; line-height: 20px; margin: 13px 0 0 10px; }
.tg { display: flex; justify-content: space-between; align-items: center; height: 20px; margin: 11px 21px 0 10px; letter-spacing: 0.06px; }
.t2 { margin-top: 13px; }
.off { width: 40px; height: 20px; border: 1px solid #a8a8a8; border-radius: 10px; font-weight: 400; font-size: 12px; color: #b0b0b0; display: flex; align-items: center; gap: 2px; padding-left: 5px; line-height: 18px; }
.off i { width: 10px; height: 10px; border-radius: 5px; background: #b0b0b0; }
.d2 { height: 32px; margin-top: 13px; background: #000; line-height: 31px; padding-left: 10px; letter-spacing: 0.18px; }

.data { width: 225px; flex: none; }
.data .phead { margin: 11px 11px 0 10px; }
.dsearch { width: 215px; height: 30px; margin: 18px 0 0 5px; border: 1px solid #8a8a8a; border-radius: 4px; background: #242424; display: flex; align-items: center; padding-left: 15px; gap: 9px; font-size: 17px; color: #8f8f8f; }
.trow { width: 213px; height: 30px; margin: 11px 0 0 6px; background: #262626; border-left: 5px solid #2aab94; border-radius: 3px; display: flex; align-items: center; padding: 0 5px 0 8px; }
.ti { margin: 0 7px 0 6px; }
.dots { margin-left: auto; }
.field { display: flex; height: 30px; align-items: center; padding-left: 39px; }
.exp { width: 16px; }
.box { width: 15px; height: 15px; border: 1px solid #b8b8b8; border-radius: 2px; margin-right: 10px; }
.fi { width: 16px; height: 18px; margin-right: 6px; }
.field span { letter-spacing: 0.03px; }

.status { height: 29px; flex: none; display: flex; align-items: center; padding-left: 5px; color: #d8d8d8; font-size: 14.600px; border-bottom: 1px solid #000; }
.zoomer { margin-left: auto; margin-right: 10px; }
.pct { width: 53px; font-size: 14px; }
.status svg:last-child { margin-right: 24px; }
```
FILE: script.js
```js
const NS = 'http://www.w3.org/2000/svg';

function add(parent, tag, attrs, text) {
  const el = document.createElementNS(NS, tag);
  for (const k in attrs) el.setAttribute(k, attrs[k]);
  if (text !== undefined) el.textContent = text;
  parent.appendChild(el);
  return el;
}

// Sum of Total by OrderDate, in thirds of a pixel
const trend = [484,765,487,845,490,598,494,680,497,635,500,640,503,800,506,680,510,830,513,600,517,795,519,655,522,805,526,605,530,815,535,608,539,650,541,785,545,645,548,655,552,795,556,613,560,820,564,845,568,790,572,645,575,820,579,558,584,745,588,595,592,828,595,660,601,828,605,790,608,590,611,780,614,567,618,815,624,615,628,820,631,645,635,770,638,660,642,710,646,735,650,648,655,810,660,835,665,755,668,810,674,610,678,802,681,548,685,760,690,510,694,785,699,710,703,795,706,720,708,790,711,590,714,808,720,725,724,800,730,680,735,802,739,845,742,690,745,798,748,690,752,636,757,808,761,760,765,822,769,690,774,838,779,720,784,808,789,710,793,835,797,712,803,842,808,700,812,690,815,830,820,830,825,704,830,827,836,700,838,780,840,655,843,780,848,640,851,835,858,612,862,810,866,745,870,843,873,538,878,820,883,832,889,582,893,825,898,710,901,780,904,688,910,700,914,830,920,740,923,770,927,575,930,815,935,745,940,633,945,795,948,662,953,662,956,760,960,770,967,832,971,590,974,780,975,543,979,712,983,515,989,775,992,776];
const pts = [];
for (let i = 0; i < trend.length; i += 2) pts.push((trend[i] / 3 + 400).toFixed(1) + ',' + (trend[i + 1] / 3 + 210).toFixed(1));
document.getElementById('dateLine').setAttribute('points', pts.join(' '));

// Sum of Quantity by Category
const cat = document.getElementById('catChart');
[[100, 616], [50, 731.5], [0, 847]].forEach(([v, y]) => {
  add(cat, 'path', { class: 'grid', d: `M212 ${y}H400` });
  add(cat, 'text', { class: 'tick', x: 203, y: y + 4, 'text-anchor': 'end' }, v);
});
[['Books', 106], ['Clothing', 106], ['Electronics', 105], ['Sports', 99], ['Home', 78]].forEach(([n, v], i) => {
  const h = v * 2.31, x = 226.5 + i * 34;
  add(cat, 'rect', { class: 'bar-cat', x, y: 846.5 - h, width: 26, height: h });
  add(cat, 'text', { class: 'cats', 'text-anchor': 'end', transform: `translate(${x + 9.5} ${860}) rotate(-35)` }, n);
});
add(cat, 'path', { class: 'grid', d: 'M212 847H400' });

// total sales by Month
const month = document.getElementById('monthChart');
[30, 20, 10, 0].forEach(v => {
  const y = 860.5 - v * 7.03;
  add(month, 'path', { class: 'grid', d: `M568 ${y}H750` });
  add(month, 'text', { class: 'tick', x: 559, y: y + 4, 'text-anchor': 'end' }, v);
});
[['January', 31], ['February', 29], ['March', 31], ['April', 30], ['May', 31], ['June', 30], ['July', 18]].forEach(([n, v], i) => {
  const h = v * 7.03, x = 578.5 + i * 24.3;
  add(month, 'rect', { class: 'bar-month', x, y: 860.5 - h, width: 19, height: h });
  add(month, 'text', { class: 'cats', 'text-anchor': 'end', transform: `translate(${x + 5.5} ${874}) rotate(-35)` }, n);
});
add(month, 'path', { class: 'grid', d: 'M568 861H750' });

// total sales by Age, from 59 down to 18
const age = document.getElementById('ageChart');
[60, 50, 40, 30, 20].forEach(v => {
  const y = 398.7 + (60 - v) * 10.91;
  add(age, 'path', { class: 'grid', d: `M882 ${y}H1300` });
  add(age, 'text', { class: 'tick', x: 872, y: y + 4, 'text-anchor': 'end' }, v);
});
[0, 5, 10].forEach(v => {
  const x = 882 + v * 29.95;
  add(age, 'path', { class: 'grid', d: `M${x} 396V895` });
  add(age, 'text', { class: 'tick', x, y: 909, 'text-anchor': 'middle' }, v);
});
[5,5,5,3,3,4,4,9,3,13,10,3,4,4,5,3,4,6,13,6,5,3,5,5,4,5,6,2,2,1,4,4,0,4,4,4,4,3,3,7,9,4].forEach((v, i) => {
  if (v) add(age, 'rect', { class: 'bar-age', x: 882, y: 405 + i * 10.91, width: v * 29.95, height: 8.8 });
});

// Data pane fields
const sigma = '<path d="M14 1.500H2L8.500 8.500L2 15.500H14" transform="translate(0 .5)" stroke="#e6e6e6" stroke-width="1.400"/>';
const calc = '<rect x="1" y="1" width="14" height="16" rx="2.500" stroke="#e6e6e6" stroke-width="1.500"/><rect x="4" y="4" width="8" height="3" stroke="#e6e6e6"/><path stroke="#e6e6e6" stroke-width="1.800" stroke-dasharray="1.800 1.300" d="M3.800 10.500H12.500M3.800 13.800H12.500"/>';
const cal = '<rect x="1" y="2" width="14" height="14" rx="2.500" stroke="#e6e6e6" stroke-width="1.500"/><path stroke="#e6e6e6" stroke-width="1.400" d="M1 6H15"/><path stroke="#e6e6e6" stroke-width="1.600" stroke-dasharray="1.800 1.500" d="M4.500 9.500H12.500M4.500 12.500H10"/>';
document.getElementById('fields').innerHTML = [
  ['Age', sigma], ['Average Order ...', calc], ['Category', ''], ['CustomerID', sigma], ['Gender', ''], ['OrderDate', cal], ['Price', sigma],
  ['ProductID', sigma], ['Quantity', sigma], ['Total', sigma], ['Total Customers', calc], ['Total Orders', calc], ['total sales', calc]
].map(([n, ic]) => `<div class="field"><svg class="exp ln" height="12" viewBox="0 0 16 12">${n === 'OrderDate' ? '<path stroke="#e6e6e6" stroke-width="1.600" d="M1.500 1L6.500 6L1.500 11"/>' : ''}</svg><i class="box"></i><svg class="fi ln" viewBox="0 0 16 18">${ic}</svg><span>${n}</span></div>`).join('');
```
